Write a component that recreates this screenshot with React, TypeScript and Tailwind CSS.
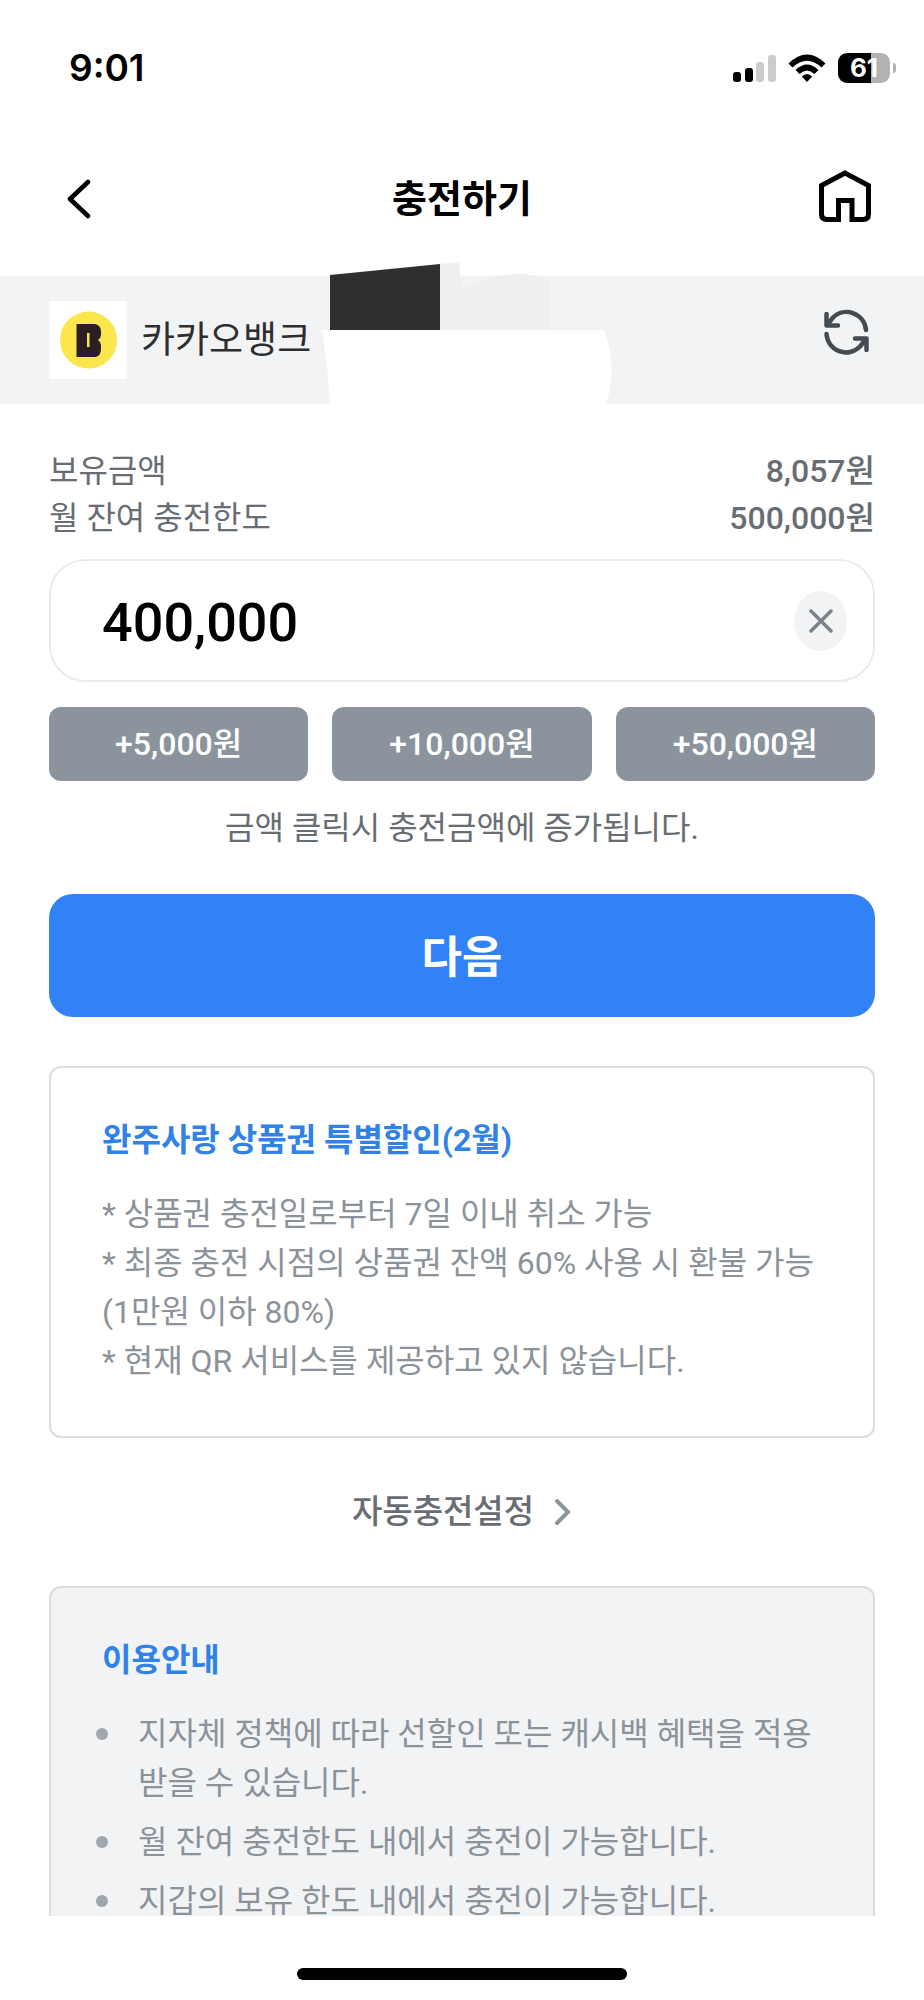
import React from "react";

const charges = ["+5,000원", "+10,000원", "+50,000원"];
const notices = [
  "지자체 정책에 따라 선할인 또는 캐시백 혜택을 적용 받을 수 있습니다.",
  "월 잔여 충전한도 내에서 충전이 가능합니다.",
  "지갑의 보유 한도 내에서 충전이 가능합니다.",
];

function StatusBar() {
  return (
    <div className="flex h-[136px] shrink-0 items-center justify-between pr-7 pl-[69px] font-['Inter','Liberation_Sans',sans-serif]">
      <span className="text-[37px] leading-10 font-semibold">9:01</span>
      <div className="flex items-center gap-3">
        <svg width="43" height="28" viewBox="0 0 43 28" aria-hidden="true">
          <rect x="0" y="18" width="8" height="10" rx="3" />
          <rect x="12" y="14" width="8" height="14" rx="3" />
          <rect x="23" y="8" width="8" height="20" rx="3" fill="#ccc" />
          <rect x="35" y="1" width="8" height="27" rx="3" fill="#ccc" />
        </svg>
        <svg width="38" height="28" viewBox="0 0 38 28" aria-hidden="true">
          <path d="M0.5 9.5 Q19 -8.5 37.5 9.5 L33.5 13.5 Q19 0 4.5 13.5Z" />
          <path d="M7.5 16 Q19 5 30.500 16 L26.500 20 Q19 13 11.500 20Z" />
          <path d="M13.800 22.500 Q19 17.500 24.200 22.500 L19 28Z" />
        </svg>
        <div className="flex items-center gap-[3px]">
          <div className="flex h-[30px] w-[52px] items-center justify-center rounded-[9px] bg-linear-to-r from-black from-63% to-[#b2b2b2] to-63% text-[26px] leading-none font-bold text-white">
            61
          </div>
          <div className="h-[10px] w-[3px] rounded-r-full bg-[#b2b2b2]" />
        </div>
      </div>
    </div>
  );
}

export default function App() {
  const [amount, setAmount] = React.useState("400,000");
  return (
    <div className="flex h-screen flex-col bg-white font-['Roboto','Noto_Sans_CJK_KR',sans-serif] text-black">
      <StatusBar />
      <header className="flex h-[140px] shrink-0 items-center justify-between px-[47px] pb-[14px]">
        <button aria-label="뒤로" className="flex size-16 items-center justify-center">
          <svg width="24" height="40" viewBox="0 0 24 40" fill="none" stroke="black" strokeWidth="4.500" strokeLinecap="round" strokeLinejoin="round">
            <path d="M21 3 3 20 21 37" />
          </svg>
        </button>
        <h1 className="text-[38px] leading-10 font-bold">충전하기</h1>
        <button aria-label="홈" className="flex size-16 items-start justify-center pt-[3px]">
          <svg width="52" height="52" viewBox="0 0 52 52" fill="none" stroke="black" strokeWidth="5">
            <path d="M26 3 2.500 15.500 V44 Q2.500 49.500 8 49.500 H19.500 V30.500 H33 V49.500 H44 Q49.500 49.500 49.500 44 V15.500Z" />
          </svg>
        </button>
      </header>
      <section className="relative flex h-32 shrink-0 items-center bg-[#f2f3f5] px-[49px]">
        <svg width="78" height="78" viewBox="0 0 78 78" role="img" aria-label="카카오뱅크 로고">
          <rect width="78" height="78" fill="white" />
          <circle cx="39.500" cy="39" r="28.500" fill="#fbe64d" />
          <path fill="#2b1f23" d="M27.500 23 H46 Q52 24 52 31 V34 Q52 37 49 39 Q52 41 52 44 V48 Q52 55 46 56 H27.500Z" />
          <path fill="#fbe64d" d="M38 32 H40.500 V46 H38Z" />
        </svg>
        <span className="ml-[14px] pt-px text-[37px] leading-10 text-[#2e2e2e]">카카오뱅크</span>
        <svg className="absolute top-[-14px] left-[322px]" width="292" height="142" viewBox="0 0 292 142" aria-hidden="true">
          <path fill="#2e302f" d="M8 13 118 2 V68 H8Z" />
          <path fill="#efeff1" d="M118 2 137 0 L140 28 Q164 12 194 12 Q212 12 228 17 V68 H118Z" />
          <path fill="white" d="M0 68 H282 Q296 106 284 142 H8 Q6 104 0 68Z" />
        </svg>
        <button aria-label="새로고침" className="mb-4 ml-auto flex size-14 items-center justify-center">
          <svg width="46" height="46" viewBox="0 0 46 46" fill="none" stroke="#444b53" strokeWidth="4.500" strokeLinecap="round" strokeLinejoin="round">
            <path d="M42 21 A19.500 19.500 0 0 0 9 8.500 L3 16 M2.500 5 V16.500 H14" />
            <path d="M2.500 25 A19.500 19.500 0 0 0 36 37.500 L42 30 M42.500 41 V29.500 H31" />
          </svg>
        </button>
      </section>
      <main className="flex min-h-0 flex-1 flex-col overflow-hidden px-[49px] pt-11">
        <dl className="grid shrink-0 grid-cols-[1fr_auto] text-[32px] leading-[47px] text-[#686d73]">
          <dt>보유금액</dt>
          <dd className="text-right font-medium">8,057원</dd>
          <dt>월 잔여 충전한도</dt>
          <dd className="text-right font-medium">500,000원</dd>
        </dl>
        <div className="mt-[17px] flex h-[123px] shrink-0 items-center rounded-[36px] border-2 border-[#eaebec] pr-[26px] pl-[51px]">
          <input
            aria-label="충전금액"
            className="min-w-0 flex-1 pt-1 text-[54px] leading-none font-medium outline-none"
            value={amount}
            onChange={(e) => setAmount(e.target.value)}
          />
          <button aria-label="지우기" onClick={() => setAmount("")} className="flex h-[60px] w-[53px] items-center justify-center rounded-[50%] bg-[#f2f3f5]">
            <svg width="24" height="24" viewBox="0 0 24 24" stroke="#7b828a" strokeWidth="3.500" strokeLinecap="round">
              <path d="M2 2 22 22 M22 2 2 22" />
            </svg>
          </button>
        </div>
        <div className="mt-[25px] grid shrink-0 grid-cols-3 gap-6">
          {charges.map((c) => (
            <button key={c} className="h-[74px] rounded-xl bg-[#8b949c] text-[32px] font-medium text-white">
              {c}
            </button>
          ))}
        </div>
        <p className="mt-[22px] shrink-0 text-center text-[32px] leading-[50px] text-[#686d73]">금액 클릭시 충전금액에 증가됩니다.</p>
        <button className="mt-[41px] h-[123px] shrink-0 rounded-3xl bg-[#3182f6] pt-1 text-[44px] font-bold text-white">다음</button>
        <section className="mt-[49px] shrink-0 rounded-xl border-2 border-[#dcdddf] px-[51px] pt-[47px] pb-[50px]">
          <h2 className="text-[32px] leading-[50px] font-bold text-[#3182e6]">완주사랑 상품권 특별할인(2월)</h2>
          <p className="mt-[25px] text-[32px] leading-[49px] text-[#8b9299]">
            * 상품권 충전일로부터 7일 이내 취소 가능
            <br />* 최종 충전 시점의 상품권 잔액 60% 사용 시 환불 가능
            <br />
            (1만원 이하 80%)
            <br />* 현재 QR 서비스를 제공하고 있지 않습니다.
          </p>
        </section>
        <a href="#auto" className="mt-[49px] flex shrink-0 items-center justify-center gap-5 text-[33px] leading-[50px] font-medium text-[#686d73]">
          자동충전설정
          <svg width="18" height="28" viewBox="0 0 18 28" fill="none" stroke="#8b949c" strokeWidth="4" strokeLinecap="round">
            <path d="M3 3 14 14 3 25" />
          </svg>
        </a>
        <section className="mt-[49px] shrink-0 rounded-xl border-2 border-[#dcdddf] bg-[#f2f3f5] px-[51px] pt-[47px] pb-12">
          <h2 className="text-[32px] leading-[50px] font-bold text-[#3182e6]">이용안내</h2>
          <ul className="mt-[25px] flex flex-col gap-[10px] text-[32px] leading-[49px] text-[#8b9299]">
            {notices.map((n) => (
              <li key={n} className="flex gap-[30px]">
                <span className="mt-[18px] -ml-[6px] size-3 shrink-0 rounded-full bg-[#9ea6ae]" />
                <span className="break-keep">{n}</span>
              </li>
            ))}
          </ul>
        </section>
      </main>
      <footer className="flex h-[84px] shrink-0 items-center justify-center pt-8">
        <div className="h-3 w-[330px] rounded-full bg-black" />
      </footer>
    </div>
  );
}
